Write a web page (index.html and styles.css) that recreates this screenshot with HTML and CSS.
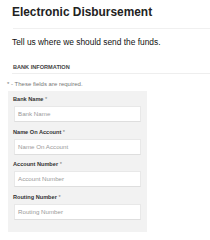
FILE: index.html
```html
<!DOCTYPE html>
<html>
<head>
<meta charset="utf-8">
<link rel="stylesheet" href="styles.css">
</head>
<body>
<div class="page">
  <h1 class="title">Electronic Disbursement</h1>
  <div class="rule"></div>
  <p class="lead">Tell us where we should send the funds.</p>
  <h2 class="section">BANK INFORMATION</h2>
  <div class="rule2"></div>
  <p class="note">* - These fields are required.</p>
  <div class="panel">
    <div class="field">
      <label class="label">Bank Name <span class="req">*</span></label>
      <div class="input">Bank Name</div>
    </div>
    <div class="field">
      <label class="label">Name On Account <span class="req">*</span></label>
      <div class="input">Name On Account</div>
    </div>
    <div class="field">
      <label class="label">Account Number <span class="req">*</span></label>
      <div class="input">Account Number</div>
    </div>
    <div class="field">
      <label class="label">Routing Number <span class="req">*</span></label>
      <div class="input">Routing Number</div>
    </div>
  </div>
</div>
</body>
</html>
```
FILE: styles.css
```css
html, body { margin: 0; padding: 0; background: #fff; }
body { font-family: "Liberation Sans", Arial, sans-serif; color: #222; }
.page { width: 210px; height: 240px; overflow: hidden; }
.title { margin: 0; padding: 5px 0 0 12px; font-size: 11.9px; line-height: 14px; font-weight: bold; color: #222; }
.rule { margin: 9px 0 0 13px; border-top: 1px solid #f0f0f0; }
.lead { margin: 8px 0 0 12px; font-size: 8.4px; line-height: 10px; color: #111; }
.section { margin: 16px 0 0 13px; font-size: 5.6px; line-height: 8px; font-weight: bold; color: #444; }
.rule2 { margin: 2px 0 0 12px; border-top: 1px solid #eee; }
.note { margin: 6px 0 0 7px; font-size: 6px; line-height: 8px; color: #777; }
.panel { margin: 3px 0 0 8px; width: 139px; box-sizing: border-box; background: #f2f2f2; padding: 4px 6px 12.5px 5px; display: flex; flex-direction: column; gap: 5.5px; }
.field { display: flex; flex-direction: column; gap: 3px; }
.label { font-size: 5.6px; line-height: 8px; font-weight: bold; color: #333; }
.req { font-weight: normal; color: #777; }
.input { margin-left: 1px; height: 16px; box-sizing: border-box; background: #fff; border: 1px solid #e8e8e8; border-bottom-color: #dedede; padding-left: 3px; font-size: 6.2px; line-height: 14px; color: #9a9a9a; }
```
